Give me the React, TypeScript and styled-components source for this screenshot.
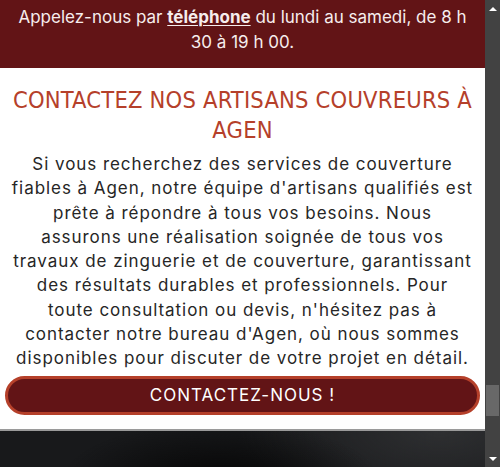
import styled, { createGlobalStyle } from 'styled-components';

const GlobalStyle = createGlobalStyle`
	html, body {
		margin: 0;
		padding: 0;
		overflow: hidden;
	}
	body {
		font-family: Inter, 'Liberation Sans', sans-serif;
	}
`;

const Page = styled.div`
	display: flex;
	width: 500px;
	height: 467px;
	overflow: hidden;
`;

const Main = styled.div`
	flex: 1;
	display: flex;
	flex-direction: column;
	min-width: 0;
`;

const TopBar = styled.div`
	background: #621416;
	color: #f6eded;
	height: 68px;
	box-sizing: border-box;
	padding: 5px 10px 0;
	text-align: center;
	font-size: 17px;
	line-height: 25px;
`;

const PhoneLink = styled.a`
	color: inherit;
	font-weight: 700;
	text-decoration: underline;
	text-underline-offset: 2px;
`;

const Section = styled.section`
	background: #fff;
	padding: 17px 5px 14px;
	text-align: center;
	border-bottom: 2px solid #9a9a9a;
`;

const Title = styled.h2`
	margin: 0 0 7px;
	font-family: 'DejaVu Sans Condensed', 'Liberation Sans', sans-serif;
	font-weight: 400;
	font-size: 23.5px;
	line-height: 30px;
	letter-spacing: 0.2px;
	color: #b5402a;
	text-transform: uppercase;
`;

const Text = styled.p`
	margin: 0 0 5px;
	font-size: 17px;
	line-height: 24.3px;
	letter-spacing: 0.95px;
	color: #262626;
`;

const Button = styled.a`
	display: block;
	box-sizing: border-box;
	height: 39px;
	border: 3px solid #b5402a;
	border-radius: 20px;
	background: #621416;
	color: #fff;
	font-size: 17px;
	line-height: 33px;
	letter-spacing: 1px;
	text-decoration: none;
`;

const Hero = styled.div`
	flex: 1;
	background:
		radial-gradient(ellipse 160px 60px at 220px 50px, #050505 0%, rgba(5, 5, 5, 0) 100%),
		radial-gradient(ellipse 200px 80px at 440px 0px, #2e2f31 0%, rgba(40, 41, 43, 0) 100%),
		#18191b;
`;

const ScrollTrack = styled.div`
	width: 15px;
	background: #424242;
	display: flex;
	flex-direction: column;
	align-items: center;
`;

const Arrow = styled.div<{ $down?: boolean }>`
	width: 0;
	height: 0;
	margin: ${(p) => (p.$down ? 'auto 0 6px' : '7px 0 0')};
	border-left: 4px solid transparent;
	border-right: 4px solid transparent;
	${(p) => (p.$down ? 'border-top: 4px solid #fff;' : 'border-bottom: 4px solid #fff;')}
`;

const Thumb = styled.div`
	width: 13px;
	height: 31px;
	margin-top: 374px;
	background: #686868;
`;

const lines = [
	'Si vous recherchez des services de couverture',
	"fiables à Agen, notre équipe d'artisans qualifiés est",
	'prête à répondre à tous vos besoins. Nous',
	'assurons une réalisation soignée de tous vos',
	'travaux de zinguerie et de couverture, garantissant',
	'des résultats durables et professionnels. Pour',
	"toute consultation ou devis, n'hésitez pas à",
	"contacter notre bureau d'Agen, où nous sommes",
	'disponibles pour discuter de votre projet en détail.',
];

const App = () => {
	return (
		<Page>
			<GlobalStyle />
			<Main>
				<TopBar>
					Appelez-nous par <PhoneLink href='#'>téléphone</PhoneLink> du lundi au samedi, de 8 h 30 à 19 h 00.
				</TopBar>
				<Section>
					<Title>Contactez nos artisans couvreurs à Agen</Title>
					<Text>
						{lines.map((l, i) => (
							<span key={i}>
								{l}
								{i < lines.length - 1 && <br />}
							</span>
						))}
					</Text>
					<Button href='#'>CONTACTEZ-NOUS !</Button>
				</Section>
				<Hero />
			</Main>
			<ScrollTrack>
				<Arrow />
				<Thumb />
				<Arrow $down />
			</ScrollTrack>
		</Page>
	);
};

export default App;
